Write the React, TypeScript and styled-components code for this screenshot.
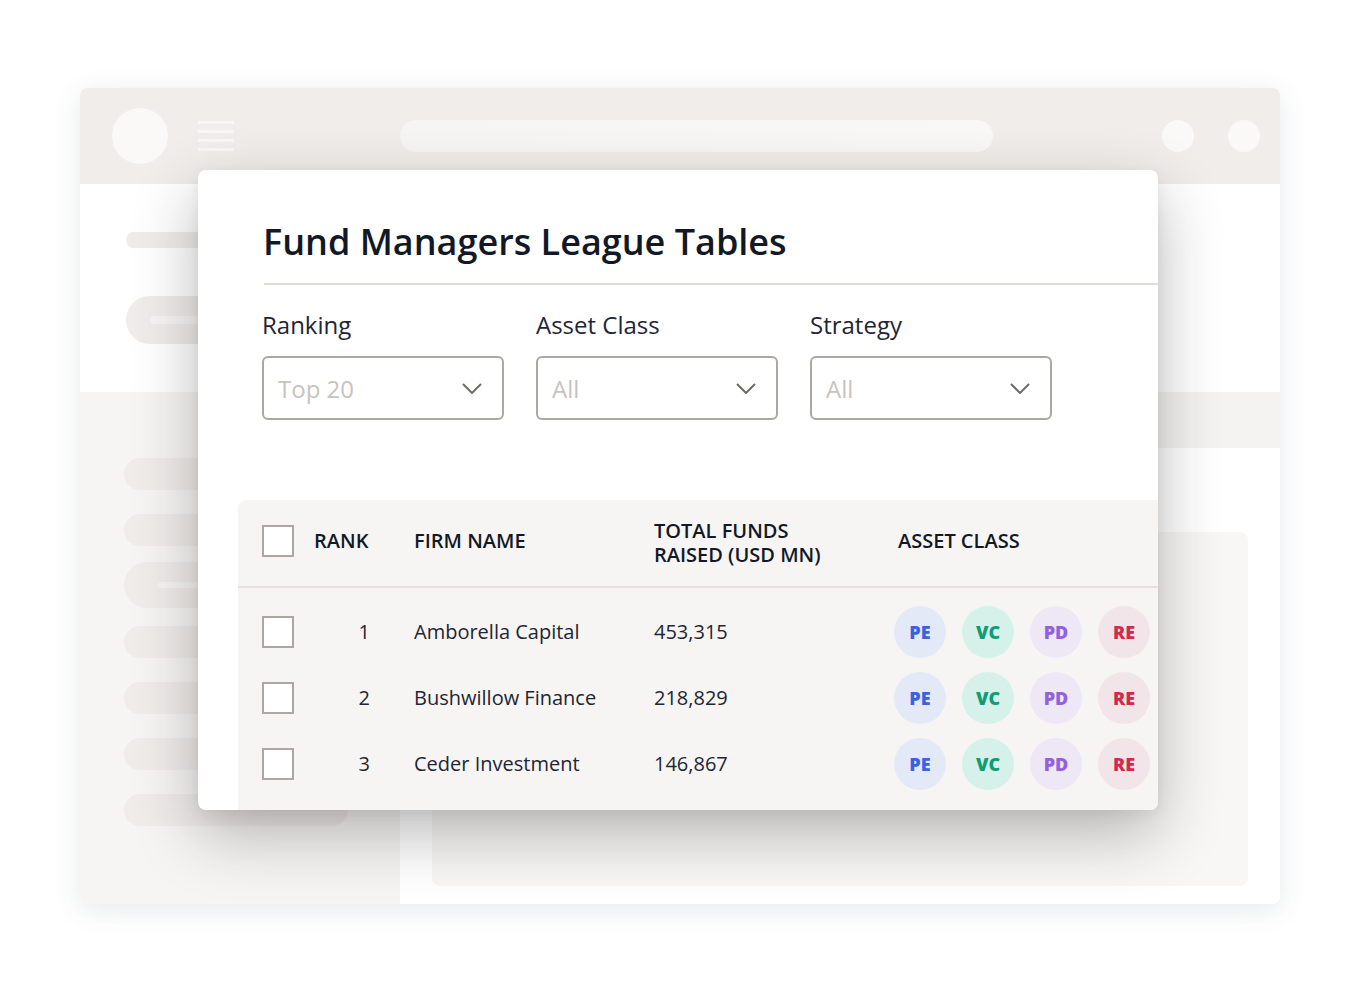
import styled, { createGlobalStyle } from 'styled-components';

const GlobalStyle = createGlobalStyle`
  html, body {
    margin: 0;
    padding: 0;
    background: #ffffff;
  }
  body {
    font-family: 'Open Sans', 'Liberation Sans', sans-serif;
    color: #1c2230;
  }
`;

const Stage = styled.div`
  width: 1360px;
  height: 992px;
  padding: 88px 80px;
  box-sizing: border-box;
  background: #ffffff;
`;

const Frame = styled.div`
  position: relative;
  width: 1200px;
  height: 816px;
  border-radius: 8px;
  background: #ffffff;
  box-shadow: 0 6px 28px rgba(60, 70, 90, 0.12);
`;

const FrameClip = styled.div`
  display: flex;
  flex-direction: column;
  height: 100%;
  border-radius: 8px;
  overflow: hidden;
`;

const TopBar = styled.div`
  display: flex;
  align-items: center;
  height: 96px;
  padding: 0 20px 0 32px;
  background: #f0edea;
  flex-shrink: 0;
`;

const Dot = styled.div<{ $size: number }>`
  width: ${(p) => p.$size}px;
  height: ${(p) => p.$size}px;
  border-radius: 50%;
  background: #faf9f8;
  flex-shrink: 0;
`;

const MenuLines = styled.div`
  display: flex;
  flex-direction: column;
  gap: 6px;
  width: 36px;
  margin-left: 30px;

  span {
    display: block;
    height: 3px;
    background: #f8f7f6;
  }
`;

const SearchPill = styled.div`
  width: 593px;
  height: 32px;
  margin-left: 166px;
  border-radius: 16px;
  background: linear-gradient(90deg, #f6f5f3, #f9f8f7);
`;

const TopActions = styled.div`
  display: flex;
  gap: 34px;
  margin-left: auto;
`;

const BodyArea = styled.div`
  display: grid;
  grid-template-columns: 320px 1fr;
  grid-template-rows: 208px 1fr;
  flex: 1;
`;

const LeftTop = styled.div`
  display: flex;
  flex-direction: column;
  gap: 48px;
  padding: 48px 0 0 46px;
  background: #ffffff;
`;

const ThinBar = styled.div`
  width: 200px;
  height: 16px;
  border-radius: 8px;
  background: #efecea;
`;

const BigPill = styled.div`
  display: flex;
  align-items: center;
  width: 240px;
  height: 48px;
  padding-left: 24px;
  box-sizing: border-box;
  border-radius: 24px;
  background: #efecea;

  span {
    width: 160px;
    height: 8px;
    border-radius: 4px;
    background: #f6f5f4;
  }
`;

const RightTop = styled.div`
  background: #ffffff;
`;

const Sidebar = styled.div`
  display: flex;
  flex-direction: column;
  gap: 24px;
  padding: 66px 0 0 44px;
  background: #f6f5f4;
`;

const SideItem = styled.div<{ $active?: boolean }>`
  display: flex;
  align-items: center;
  width: 224px;
  height: ${(p) => (p.$active ? 46 : 32)}px;
  margin: ${(p) => (p.$active ? '-8px 0 -6px' : '0')};
  padding-left: 34px;
  box-sizing: border-box;
  border-radius: 23px;
  background: #efecea;

  span {
    width: 140px;
    height: 6px;
    border-radius: 3px;
    background: #f6f5f4;
  }
`;

const MainPane = styled.div`
  display: flex;
  flex-direction: column;
  background: #ffffff;
`;

const Band = styled.div`
  height: 56px;
  background: #f4f3f2;
  flex-shrink: 0;
`;

const MainContent = styled.div`
  flex: 1;
  padding: 84px 32px 18px 32px;
  border-top-right-radius: 8px;
  background: #ffffff;
`;

const Panel = styled.div`
  height: 100%;
  border-radius: 8px;
  background: #f8f7f6;
`;

/* floating card */

const Card = styled.div`
  position: absolute;
  left: 118px;
  top: 82px;
  width: 960px;
  height: 640px;
  border-radius: 8px;
  background: #ffffff;
  overflow: hidden;
  box-shadow: 0 24px 64px rgba(30, 28, 26, 0.3), 0 4px 14px rgba(30, 28, 26, 0.06);
`;

const Title = styled.h1`
  margin: 0;
  padding: 50px 0 0 65px;
  font-size: 36px;
  line-height: 44px;
  font-weight: 600;
  color: #121826;
  letter-spacing: 0;
`;

const Divider = styled.div`
  height: 2px;
  margin: 19px 0 0 66px;
  background: #e0dcd8;
`;

const Filters = styled.div`
  display: flex;
  gap: 32px;
  padding: 24px 0 0 64px;
`;

const Field = styled.div`
  display: flex;
  flex-direction: column;
  gap: 15px;
`;

const Label = styled.div`
  font-size: 24px;
  line-height: 32px;
  color: #1f2533;
`;

const Select = styled.div`
  display: flex;
  align-items: center;
  justify-content: space-between;
  width: 242px;
  height: 64px;
  padding: 0 20px 0 14px;
  box-sizing: border-box;
  border: 2px solid #aca7a3;
  border-radius: 6px;
  font-size: 24px;
  color: #c7c3bf;
  background: #ffffff;
`;

const Table = styled.div`
  margin: 80px 0 0 40px;
  height: 400px;
  border-top-left-radius: 8px;
  background: #f6f5f4;
`;

const Row = styled.div<{ $head?: boolean }>`
  display: grid;
  grid-template-columns: 52px 100px 240px 244px 1fr;
  align-items: center;
  height: ${(p) => (p.$head ? 88 : 66)}px;
  padding: ${(p) => (p.$head ? '0 0 4px 24px' : '0 0 0 24px')};
  box-sizing: border-box;
  border-bottom: ${(p) => (p.$head ? '2px solid #e6e0db' : 'none')};
  font-size: 20px;
  line-height: 24px;
  color: #1f2533;
`;

const Body = styled.div`
  padding-top: 11px;
`;

const HeadCell = styled.div<{ $twoLine?: boolean }>`
  margin-top: ${(p) => (p.$twoLine ? 4 : 0)}px;
  font-weight: 600;
  color: #121826;
  text-transform: uppercase;
`;

const RankCell = styled.div`
  text-align: right;
  padding-right: 44px;
`;

const Checkbox = styled.div`
  width: 32px;
  height: 32px;
  box-sizing: border-box;
  border: 2px solid #aca7a3;
  background: #ffffff;
`;

const Badges = styled.div`
  display: flex;
  gap: 16px;
  margin-left: -4px;
`;

const badgeColors = {
  PE: { bg: '#e4e9f7', fg: '#3b63df' },
  VC: { bg: '#d6f1ea', fg: '#0e9d74' },
  PD: { bg: '#ede7f6', fg: '#9460de' },
  RE: { bg: '#f2e5e9', fg: '#d02a4c' },
};

type BadgeKind = keyof typeof badgeColors;

const Badge = styled.div<{ $kind: BadgeKind }>`
  display: flex;
  align-items: center;
  justify-content: center;
  width: 52px;
  height: 52px;
  border-radius: 50%;
  background: ${(p) => badgeColors[p.$kind].bg};
  color: ${(p) => badgeColors[p.$kind].fg};
  font-size: 18px;
  font-weight: 800;
`;

const Chevron = () => (
  <svg width="20" height="11" viewBox="0 0 20 11" fill="none">
    <path d="M1 1l9 9 9-9" stroke="#6e6c6a" strokeWidth="2" />
  </svg>
);

const filters = [
  { label: 'Ranking', value: 'Top 20' },
  { label: 'Asset Class', value: 'All' },
  { label: 'Strategy', value: 'All' },
];

const firms = [
  { rank: 1, name: 'Amborella Capital', total: '453,315' },
  { rank: 2, name: 'Bushwillow Finance', total: '218,829' },
  { rank: 3, name: 'Ceder Investment', total: '146,867' },
];

const kinds: BadgeKind[] = ['PE', 'VC', 'PD', 'RE'];

export default function App() {
  return (
    <>
      <GlobalStyle />
      <Stage>
        <Frame>
          <FrameClip>
            <TopBar>
              <Dot $size={56} />
              <MenuLines>
                <span />
                <span />
                <span />
                <span />
              </MenuLines>
              <SearchPill />
              <TopActions>
                <Dot $size={32} />
                <Dot $size={32} />
              </TopActions>
            </TopBar>

            <BodyArea>
              <LeftTop>
                <ThinBar />
                <BigPill>
                  <span />
                </BigPill>
              </LeftTop>
              <RightTop />
              <Sidebar>
                <SideItem />
                <SideItem />
                <SideItem $active>
                  <span />
                </SideItem>
                <SideItem />
                <SideItem />
                <SideItem />
                <SideItem />
              </Sidebar>
              <MainPane>
                <Band />
                <MainContent>
                  <Panel />
                </MainContent>
              </MainPane>
            </BodyArea>
          </FrameClip>

          <Card>
            <Title>Fund Managers League Tables</Title>
            <Divider />
            <Filters>
              {filters.map((f) => (
                <Field key={f.label}>
                  <Label>{f.label}</Label>
                  <Select>
                    <span>{f.value}</span>
                    <Chevron />
                  </Select>
                </Field>
              ))}
            </Filters>

            <Table>
              <Row $head>
                <Checkbox />
                <HeadCell>Rank</HeadCell>
                <HeadCell>Firm Name</HeadCell>
                <HeadCell $twoLine>
                  Total Funds
                  <br />
                  Raised (USD MN)
                </HeadCell>
                <HeadCell>Asset Class</HeadCell>
              </Row>
              <Body>
                {firms.map((f) => (
                  <Row key={f.rank}>
                    <Checkbox />
                    <RankCell>{f.rank}</RankCell>
                    <div>{f.name}</div>
                    <div>{f.total}</div>
                    <Badges>
                      {kinds.map((k) => (
                        <Badge key={k} $kind={k}>
                          {k}
                        </Badge>
                      ))}
                    </Badges>
                  </Row>
                ))}
              </Body>
            </Table>
          </Card>
        </Frame>
      </Stage>
    </>
  );
}
